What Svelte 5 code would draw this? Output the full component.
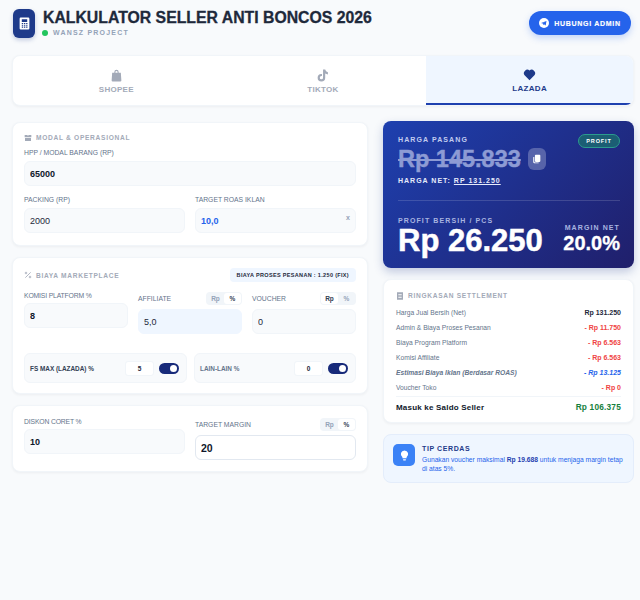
<script>
	const tabs = [
		{ name: 'SHOPEE', icon: 'bag' },
		{ name: 'TIKTOK', icon: 'note' },
		{ name: 'LAZADA', icon: 'heart', active: true }
	];

	const rows = [
		{ label: 'Harga Jual Bersih (Net)', value: 'Rp 131.250', tone: 'dark' },
		{ label: 'Admin & Biaya Proses Pesanan', value: '- Rp 11.750', tone: 'red' },
		{ label: 'Biaya Program Platform', value: '- Rp 6.563', tone: 'red' },
		{ label: 'Komisi Affiliate', value: '- Rp 6.563', tone: 'red' },
		{ label: 'Estimasi Biaya Iklan (Berdasar ROAS)', value: '- Rp 13.125', tone: 'blue', em: true },
		{ label: 'Voucher Toko', value: '- Rp 0', tone: 'red' }
	];
</script>

<div class="page">
	<header class="top">
		<div class="brand">
			<div class="logo">
				<svg viewBox="0 0 24 24" width="13" height="13" fill="#fff">
					<path fill-rule="evenodd" d="M5 1h14a2 2 0 0 1 2 2v18a2 2 0 0 1-2 2H5a2 2 0 0 1-2-2V3a2 2 0 0 1 2-2zm2 3v5h10V4H7zm0 7v2.500h2.500V11H7zm4 0v2.500h2.500V11H11zm4 0v2.500h2.500V11H15zM7 15v2.500h2.500V15H7zm4 0v2.500h2.500V15H11zm4 0v2.500h2.500V15H15zM7 19v1.500h2.500V19H7zm4 0v1.500h2.500V19H11zm4 0v1.500h2.500V19H15z" />
				</svg>
			</div>
			<div>
				<h1>KALKULATOR SELLER ANTI BONCOS 2026</h1>
				<div class="sub"><span class="dot"></span>WANSZ PROJECT</div>
			</div>
		</div>
		<button class="admin">
			<svg viewBox="0 0 24 24" width="10" height="10">
				<circle cx="12" cy="12" r="12" fill="#fff" />
				<path d="M5 12l13-5-2 11-4-3-2 2-1-4 6-4-7 4z" fill="#2563eb" />
			</svg>
			HUBUNGI ADMIN
		</button>
	</header>

	<nav class="tabs">
		{#each tabs as tab}
			<div class="tab" class:active={tab.active}>
				<svg viewBox="0 0 24 24" width="13" height="13" fill="currentColor">
					{#if tab.icon === 'bag'}
						<path d="M8 7V5.500a4 4 0 0 1 8 0V7h4l1 14a2 2 0 0 1-2 2H5a2 2 0 0 1-2-2L4 7h4zm2 0h4V5.500a2 2 0 0 0-4 0V7z" />
					{:else if tab.icon === 'note'}
						<path d="M13 1h4a6 6 0 0 0 5 5v4a10 10 0 0 1-5-1.500V16a7 7 0 1 1-7-7h1v4h-1a3 3 0 1 0 3 3V1z" />
					{:else}
						<path d="M12 22.500L2.500 13A6.500 6.500 0 0 1 12 4.500 6.500 6.500 0 0 1 21.500 13z" />
					{/if}
				</svg>
				<span>{tab.name}</span>
			</div>
		{/each}
	</nav>

	<main class="cols">
		<section class="left">
			<div class="card base">
				<h2>
					<svg viewBox="0 0 24 24" width="8" height="8" fill="currentColor"><path d="M2 3h8l2 3 2-3h8v7H2zM3 12h18v9H3z" /></svg>
					MODAL &amp; OPERASIONAL
				</h2>
				<div class="field">
					<span class="label">HPP / MODAL BARANG (RP)</span>
					<input class="strong" value="65000" />
				</div>
				<div class="two row2">
					<div class="field">
						<span class="label">PACKING (RP)</span>
						<input value="2000" />
					</div>
					<div class="field">
						<span class="label">TARGET ROAS IKLAN</span>
						<div class="with-suffix">
							<input class="roas" value="10,0" />
							<span class="suffix">x</span>
						</div>
					</div>
				</div>
			</div>

			<div class="card fees">
				<div class="head">
					<h2 class="flush">
						<svg viewBox="0 0 24 24" width="8" height="8" fill="none" stroke="currentColor" stroke-width="2.500"><path d="M4 20L20 4" /><circle cx="6" cy="6" r="2.500" /><circle cx="18" cy="18" r="2.500" /></svg>
						BIAYA MARKETPLACE
					</h2>
					<span class="pill">BIAYA PROSES PESANAN : 1.250 (FIX)</span>
				</div>
				<div class="three">
					<div class="field">
						<span class="label tight">KOMISI PLATFORM %</span>
						<input class="bold" value="8" />
					</div>
					<div class="field">
						<div class="label-row">
							<span class="label">AFFILIATE</span>
							<div class="seg"><span>Rp</span><span class="on">%</span></div>
						</div>
						<input class="tinted" value="5,0" />
					</div>
					<div class="field">
						<div class="label-row">
							<span class="label">VOUCHER</span>
							<div class="seg"><span class="on">Rp</span><span>%</span></div>
						</div>
						<input value="0" />
					</div>
				</div>
				<div class="toggles">
					<div class="tog-box">
						<span class="tog-label dark">FS MAX (LAZADA) %</span>
						<input class="mini" value="5" />
						<span class="switch"></span>
					</div>
					<div class="tog-box">
						<span class="tog-label">LAIN-LAIN %</span>
						<input class="mini" value="0" />
						<span class="switch"></span>
					</div>
				</div>
			</div>

			<div class="card extra">
				<div class="two top-align">
					<div class="field">
						<span class="label tight">DISKON CORET %</span>
						<input class="bold" value="10" />
					</div>
					<div class="field">
						<div class="label-row">
							<span class="label">TARGET MARGIN</span>
							<div class="seg"><span>Rp</span><span class="on">%</span></div>
						</div>
						<input class="white" value="20" />
					</div>
				</div>
			</div>
		</section>

		<section class="right">
			<div class="hero">
				<div class="hero-top">
					<div>
						<div class="cap">HARGA PASANG</div>
						<div class="price-row">
							<span class="price">Rp 145.833</span>
							<span class="copy">
								<svg viewBox="0 0 24 24" width="10" height="10" fill="#fff"><path d="M9 2h9a2 2 0 0 1 2 2v13a2 2 0 0 1-2 2H9a2 2 0 0 1-2-2V4a2 2 0 0 1 2-2z" /><path d="M4 7h1.500v11A2.500 2.500 0 0 0 8 20.500h8V22H5a2 2 0 0 1-2-2V8a1 1 0 0 1 1-1z" /></svg>
							</span>
						</div>
						<div class="net">HARGA NET: <u>RP 131.250</u></div>
					</div>
					<span class="badge">PROFIT</span>
				</div>
				<div class="hero-line"></div>
				<div class="hero-bottom">
					<div>
						<div class="cap dim">PROFIT BERSIH / PCS</div>
						<div class="profit">Rp 26.250</div>
					</div>
					<div class="margin">
						<div class="cap dim">MARGIN NET</div>
						<div class="margin-val">20.0%</div>
					</div>
				</div>
			</div>

			<div class="card settle">
				<h2>
					<svg viewBox="0 0 24 24" width="8" height="8" fill="currentColor"><path fill-rule="evenodd" d="M3 1h18v22H3zM7 6v2h10V6zm0 5v2h10v-2zm0 5v2h10v-2z" /></svg>
					RINGKASAN SETTLEMENT
				</h2>
				{#each rows as row}
					<div class="line" class:em={row.em}>
						<span>{row.label}</span>
						<b class={row.tone}>{row.value}</b>
					</div>
				{/each}
				<div class="total">
					<span>Masuk ke Saldo Seller</span>
					<b>Rp 106.375</b>
				</div>
			</div>

			<div class="tip">
				<div class="bulb">
					<svg viewBox="0 0 24 24" width="11" height="11" fill="#fff"><path d="M12 1a8 8 0 0 1 4.500 14.600V18h-9v-2.400A8 8 0 0 1 12 1z" /><path d="M9 20h6v1a2 2 0 0 1-2 2h-2a2 2 0 0 1-2-2z" /></svg>
				</div>
				<div>
					<div class="tip-title">TIP CERDAS</div>
					<p>Gunakan voucher maksimal <b>Rp 19.688</b> untuk menjaga margin tetap di atas 5%.</p>
				</div>
			</div>
		</section>
	</main>
</div>

<style>
	:global(body) {
		margin: 0;
		background: #f8fafc;
	}

	.page {
		box-sizing: border-box;
		width: 640px;
		height: 600px;
		padding: 9px 6px 0 12px;
		font-family: 'Liberation Sans', Arial, sans-serif;
		color: #1e293b;
		overflow: hidden;
	}

	.top {
		display: flex;
		justify-content: space-between;
		align-items: flex-start;
		padding: 0 3px 0 1px;
		height: 46px;
	}
	.brand {
		display: flex;
		gap: 8px;
	}
	.logo {
		width: 22px;
		height: 29px;
		border-radius: 6px;
		background: #1e3a8a;
		box-shadow: 0 2px 4px rgba(30, 58, 138, 0.25);
		display: flex;
		align-items: center;
		justify-content: center;
	}
	h1 {
		margin: 0;
		font-size: 15.8px;
		line-height: 18px;
		font-weight: 700;
		-webkit-text-stroke: 0.3px currentColor;
		color: #1e293b;
	}
	.sub {
		display: flex;
		align-items: center;
		gap: 5px;
		margin-top: 2px;
		font-size: 7px;
		font-weight: 700;
		letter-spacing: 1.2px;
		color: #94a3b8;
		margin-left: -1px;
	}
	.dot {
		width: 6px;
		height: 6px;
		border-radius: 50%;
		background: #22c55e;
	}
	.admin {
		margin-top: 2px;
		height: 24px;
		width: 102px;
		border: 0;
		border-radius: 12px;
		background: #2563eb;
		color: #fff;
		font: 700 7px 'Liberation Sans', Arial, sans-serif;
		letter-spacing: 0.7px;
		-webkit-text-stroke: 0.15px currentColor;
		display: flex;
		align-items: center;
		justify-content: center;
		gap: 5px;
		padding: 0;
		box-shadow: 0 3px 7px rgba(37, 99, 235, 0.25);
	}

	.tabs {
		display: grid;
		grid-template-columns: repeat(3, 1fr);
		height: 51px;
		background: #fff;
		border-radius: 8px;
		border: 1px solid #f1f5f9;
		box-sizing: border-box;
		overflow: hidden;
		box-shadow: 0 1px 3px rgba(15, 23, 42, 0.05);
	}
	.tab {
		display: flex;
		flex-direction: column;
		align-items: center;
		justify-content: center;
		gap: 3px;
		font-size: 8px;
		font-weight: 700;
		letter-spacing: 0.3px;
		color: #a3aab8;
		padding-top: 1px;
	}
	.tab.active {
		background: #eff6ff;
		color: #1e3a8a;
		border-bottom: 2px solid #1e40af;
	}

	.cols {
		display: grid;
		grid-template-columns: 356px 251px;
		gap: 15px;
		margin-top: 15px;
		align-items: start;
	}
	.left,
	.right {
		display: flex;
		flex-direction: column;
		gap: 11px;
	}
	.left {
		padding-top: 1px;
	}

	.card {
		background: #fff;
		border: 1px solid #f1f5f9;
		border-radius: 8px;
		box-sizing: border-box;
		padding: 10px 11px 11px;
		box-shadow: 0 1px 3px rgba(15, 23, 42, 0.05);
	}
	.card.base {
		padding-bottom: 12px;
	}
	.card.fees {
		padding-bottom: 10px;
	}
	.card.extra {
		padding-top: 12px;
	}
	h2 {
		display: flex;
		align-items: center;
		gap: 4px;
		margin: 0 0 6px;
		font-size: 6.6px;
		line-height: 9px;
		font-weight: 700;
		letter-spacing: 0.7px;
		color: #a3aab8;
	}
	h2.flush {
		margin: 0;
	}

	.field {
		display: flex;
		flex-direction: column;
		min-width: 0;
	}
	.label {
		font-size: 6.8px;
		line-height: 9px;
		font-weight: 400;
		color: #64748b;
		margin-bottom: 4px;
	}
	.label.tight {
		line-height: 8px;
		letter-spacing: -0.15px;
		margin-bottom: 3px;
	}
	input {
		box-sizing: border-box;
		width: 100%;
		height: 25px;
		border: 1px solid #f1f5f9;
		border-radius: 6px;
		background: #f8fafc;
		padding: 0 5px;
		font: 400 9px 'Liberation Sans', Arial, sans-serif;
		color: #1e293b;
		outline: none;
	}
	input.strong,
	input.bold {
		font-weight: 700;
		color: #0f172a;
	}
	input.roas {
		color: #2563eb;
		font-weight: 700;
	}
	.with-suffix {
		position: relative;
	}
	.suffix {
		position: absolute;
		right: 6px;
		top: 6px;
		font-size: 7px;
		font-weight: 700;
		color: #94a3b8;
	}
	.two {
		display: grid;
		grid-template-columns: 1fr 1fr;
		gap: 10px;
	}
	.row2 {
		margin-top: 9px;
	}
	.top-align {
		align-items: start;
	}
	.head {
		display: flex;
		justify-content: space-between;
		align-items: center;
		margin-bottom: 10px;
	}
	.pill {
		height: 14px;
		padding: 0 7px;
		border-radius: 4px;
		background: #eff6ff;
		font-size: 5.500px;
		font-weight: 700;
		line-height: 14px;
		color: #1e293b;
		letter-spacing: 0.33px;
	}
	.three {
		display: grid;
		grid-template-columns: repeat(3, 1fr);
		gap: 10px;
		align-items: start;
	}
	.label-row {
		display: flex;
		justify-content: space-between;
		align-items: center;
		margin-bottom: 4px;
	}
	.label-row .label {
		margin: 0;
	}
	.seg {
		display: flex;
		padding: 1px;
		height: 13px;
		box-sizing: border-box;
		border-radius: 4px;
		background: #f1f5f9;
		font-size: 6.500px;
		font-weight: 700;
		color: #94a3b8;
	}
	.seg span {
		width: 17px;
		display: flex;
		align-items: center;
		justify-content: center;
		border-radius: 3px;
	}
	.seg .on {
		background: #fff;
		color: #334155;
	}
	input.tinted {
		background: #eff6ff;
		border-color: #eff6ff;
	}
	input.white {
		background: #fff;
		border-color: #e2e8f0;
		font-size: 10.500px;
		font-weight: 700;
		color: #0f172a;
	}
	.toggles {
		display: grid;
		grid-template-columns: 163px 162px;
		gap: 7px;
		margin-top: 19px;
	}
	.tog-box {
		display: flex;
		align-items: center;
		height: 30px;
		box-sizing: border-box;
		padding: 0 7px 0 5px;
		border: 1px solid #f1f5f9;
		border-radius: 6px;
		background: #f8fafc;
	}
	.tog-label {
		flex: 1;
		font-size: 6.400px;
		font-weight: 700;
		color: #64748b;
	}
	.tog-label.dark {
		color: #334155;
	}
	input.mini {
		width: 29px;
		height: 15px;
		padding: 0;
		border-radius: 3px;
		background: #fff;
		text-align: center;
		font-size: 6.500px;
		font-weight: 700;
		margin-right: 5px;
	}
	.switch {
		position: relative;
		width: 20px;
		height: 11px;
		border-radius: 6px;
		background: #172a7a;
	}
	.switch::after {
		content: '';
		position: absolute;
		top: 2px;
		right: 2px;
		width: 7px;
		height: 7px;
		border-radius: 50%;
		background: #fff;
	}

	.hero {
		height: 147px;
		box-sizing: border-box;
		padding: 14px 14px 14px 15px;
		border-radius: 8px;
		background: linear-gradient(135deg, #1e40af, #201f6b);
		box-shadow: 0 4px 10px rgba(30, 58, 138, 0.25);
		color: #fff;
	}
	.hero-top {
		display: flex;
		justify-content: space-between;
		align-items: flex-start;
	}
	.cap {
		font-size: 7px;
		line-height: 9px;
		font-weight: 700;
		letter-spacing: 1.1px;
		color: #c3cdf0;
	}
	.cap.dim {
		color: #a8b4e0;
	}
	.price-row {
		display: flex;
		align-items: center;
		gap: 7px;
		margin-top: 2px;
	}
	.price {
		font-size: 23.500px;
		line-height: 26px;
		font-weight: 700;
		-webkit-text-stroke: 0.4px currentColor;
		text-decoration: line-through;
		color: #8d9bd4;
	}
	.copy {
		width: 18px;
		height: 22px;
		border-radius: 6px;
		background: rgba(255, 255, 255, 0.25);
		display: flex;
		align-items: center;
		justify-content: center;
	}
	.net {
		margin-top: 4px;
		font-size: 7px;
		line-height: 9px;
		font-weight: 700;
		letter-spacing: 1px;
		color: #e6ebfb;
	}
	.badge {
		margin-top: -1px;
		height: 14px;
		width: 42px;
		box-sizing: border-box;
		border: 1px solid #2b9c8e;
		border-radius: 8px;
		background: #1b5e74;
		font-size: 5.500px;
		font-weight: 700;
		letter-spacing: 0.9px;
		display: flex;
		align-items: center;
		justify-content: center;
	}
	.hero-line {
		height: 1px;
		margin: 15px 0;
		background: rgba(255, 255, 255, 0.15);
	}
	.hero-bottom {
		display: flex;
		justify-content: space-between;
		align-items: flex-start;
	}
	.profit {
		font-size: 31px;
		line-height: 32px;
		font-weight: 700;
		-webkit-text-stroke: 0.5px currentColor;
	}
	.margin {
		text-align: right;
		padding-top: 7px;
	}
	.margin-val {
		font-size: 20px;
		line-height: 21px;
		font-weight: 700;
		-webkit-text-stroke: 0.3px currentColor;
		margin-top: 1px;
	}

	.settle {
		padding: 11px 12px 8px;
		height: 144px;
	}
	.settle h2 {
		margin-bottom: 5px;
	}
	.line {
		display: flex;
		justify-content: space-between;
		align-items: center;
		height: 15px;
		font-size: 6.700px;
		color: #64748b;
	}
	.line.em {
		font-style: italic;
		font-weight: 700;
	}
	.line b {
		font-size: 7px;
	}
	.dark {
		color: #1e293b;
	}
	.red {
		color: #ef4444;
	}
	.blue {
		color: #2563eb;
	}
	.total {
		display: flex;
		justify-content: space-between;
		align-items: center;
		margin-top: 1px;
		padding-top: 5px;
		border-top: 1px solid #f1f5f9;
		font-size: 8px;
		font-weight: 700;
		letter-spacing: 0.2px;
		color: #0f172a;
	}
	.total b {
		color: #15803d;
		font-size: 8.300px;
	}

	.tip {
		display: flex;
		gap: 7px;
		height: 49px;
		box-sizing: border-box;
		padding: 9px;
		border: 1px solid #e4edfb;
		border-radius: 8px;
		background: #eff6ff;
	}
	.bulb {
		flex: none;
		width: 22px;
		height: 22px;
		border-radius: 5px;
		background: #3b82f6;
		display: flex;
		align-items: center;
		justify-content: center;
	}
	.tip-title {
		font-size: 7px;
		line-height: 9px;
		font-weight: 700;
		letter-spacing: 0.6px;
		color: #1e3a8a;
	}
	p {
		margin: 2px 0 0;
		font-size: 6.700px;
		line-height: 9px;
		color: #2563eb;
	}
	p b {
		color: #1e40af;
	}
</style>
